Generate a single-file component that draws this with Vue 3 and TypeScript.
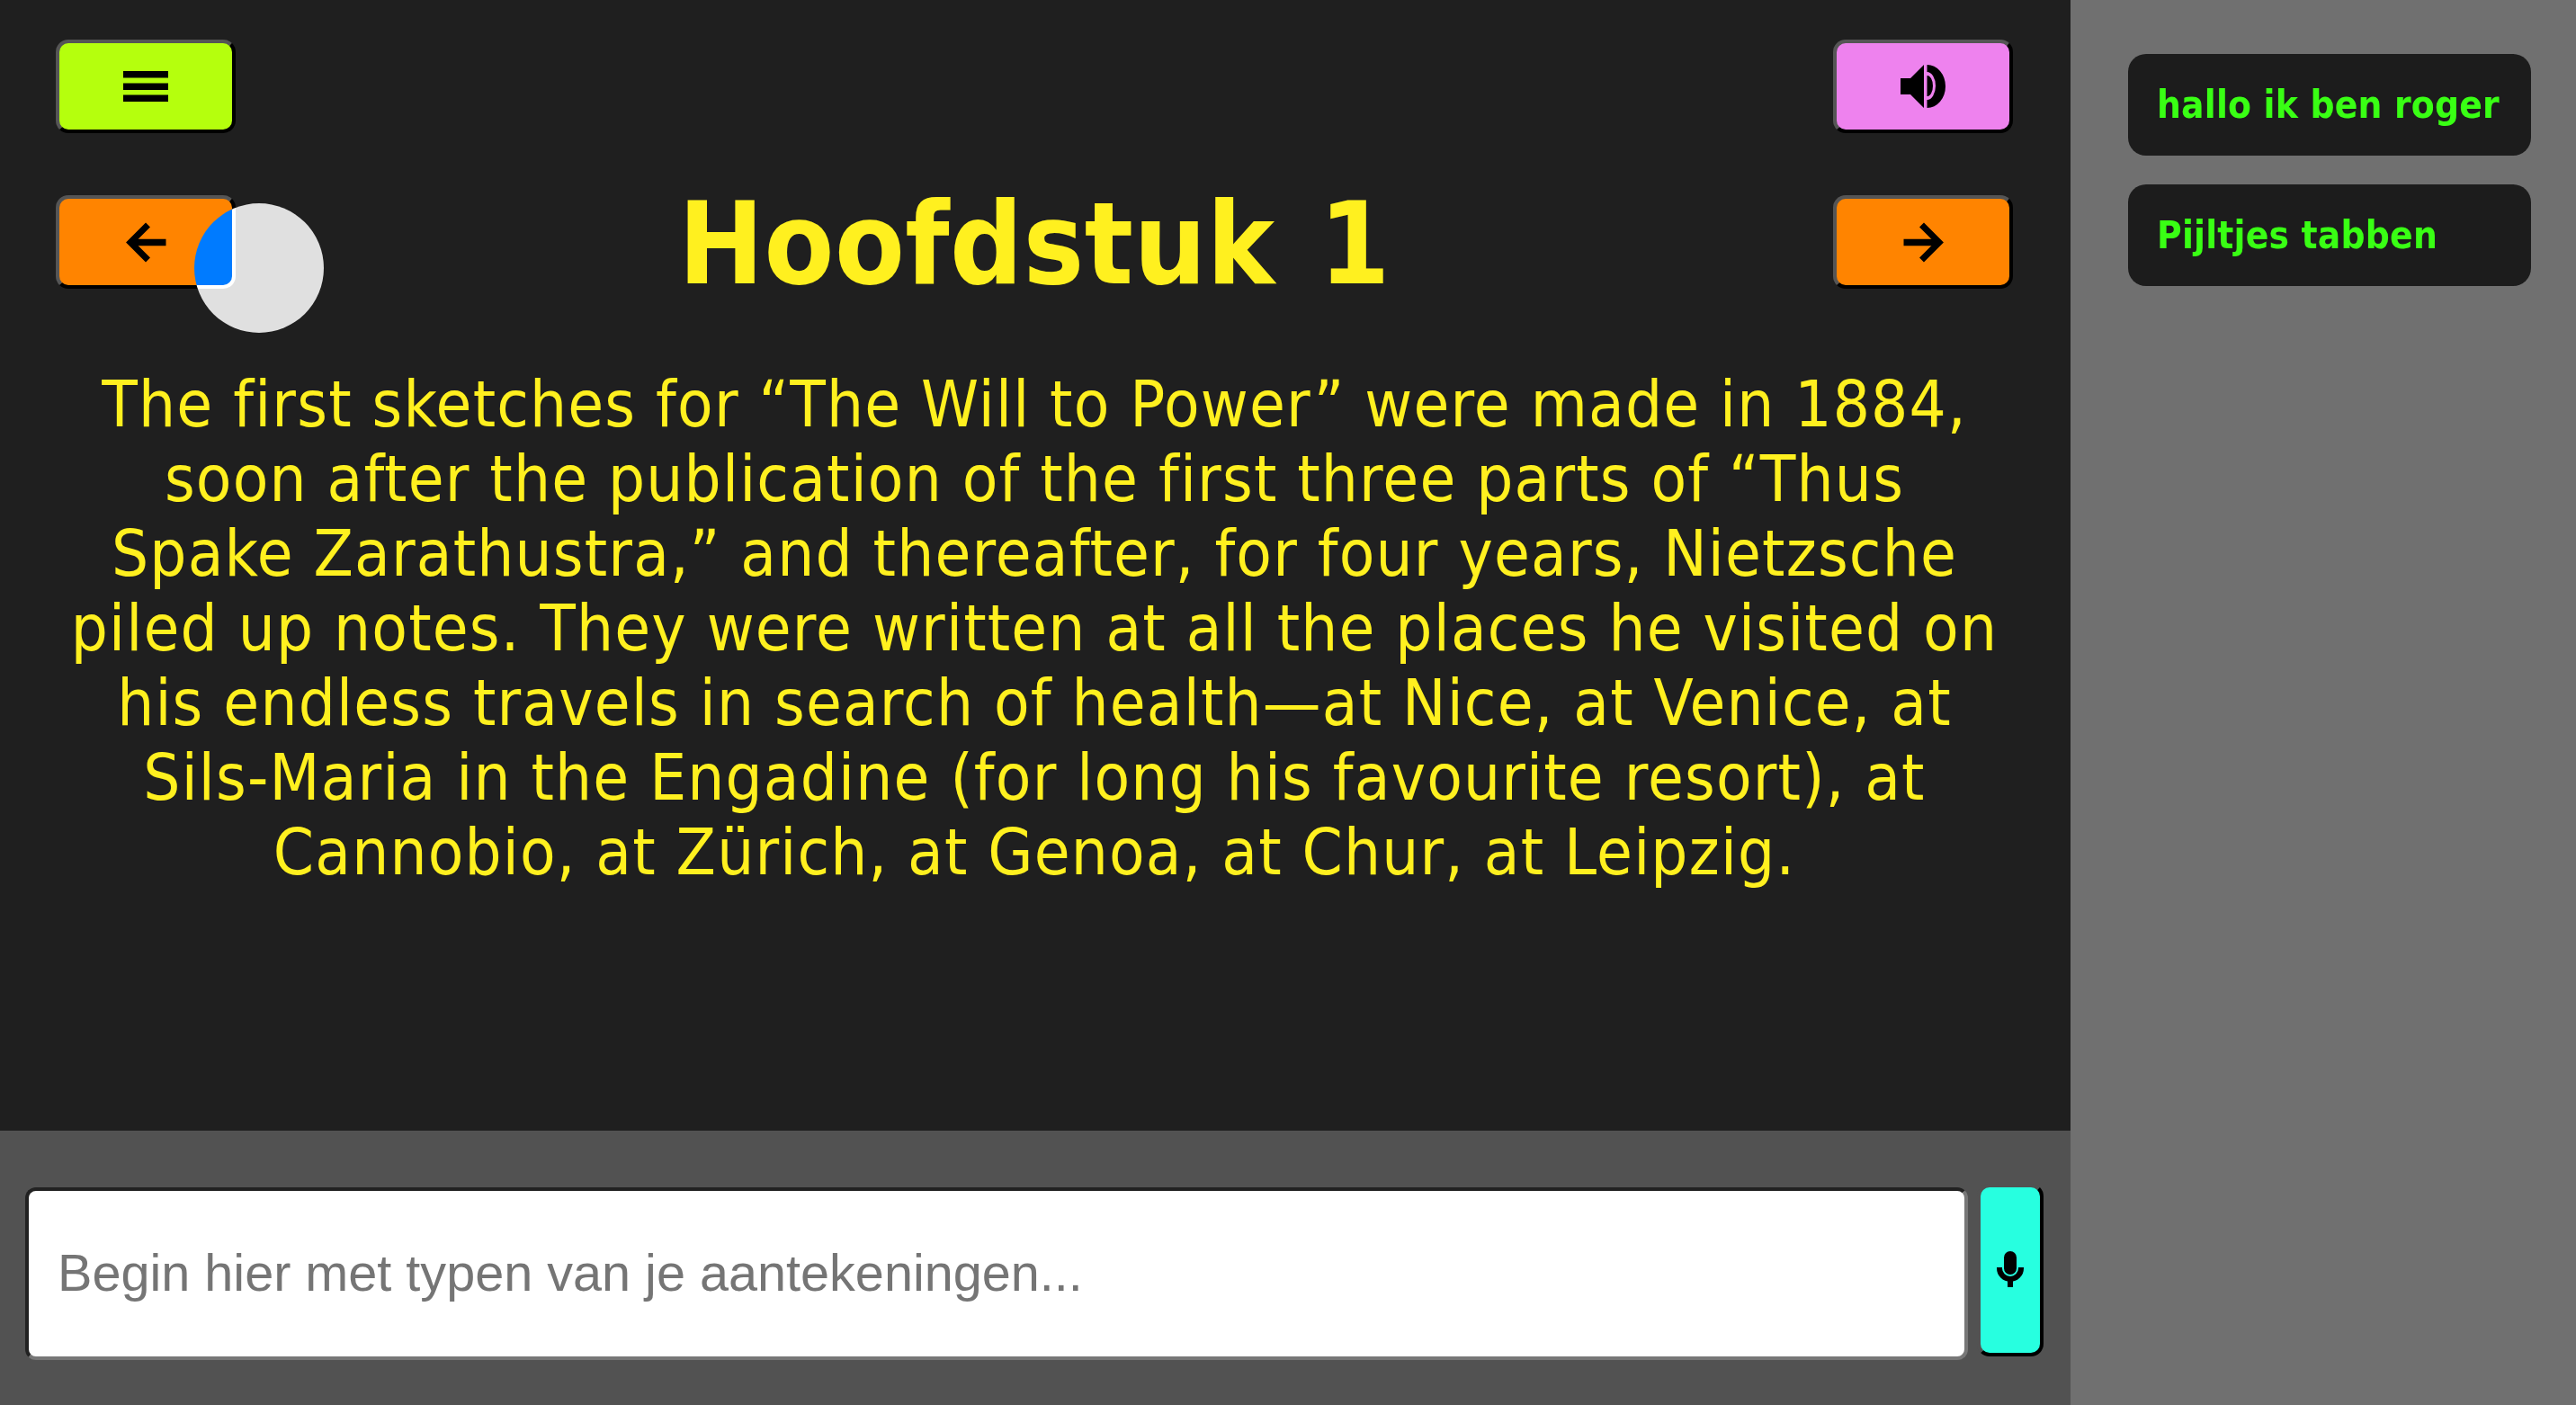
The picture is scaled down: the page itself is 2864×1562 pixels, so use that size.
<script setup lang="ts">
const lines: string[] = [
  'The first sketches for “The Will to Power” were made in 1884,',
  'soon after the publication of the first three parts of “Thus',
  'Spake Zarathustra,” and thereafter, for four years, Nietzsche',
  'piled up notes. They were written at all the places he visited on',
  'his endless travels in search of health—at Nice, at Venice, at',
  'Sils-Maria in the Engadine (for long his favourite resort), at',
  'Cannobio, at Zürich, at Genoa, at Chur, at Leipzig.',
]
const tabs: string[] = ['hallo ik ben roger', 'Pijltjes tabben']
</script>

<template>
  <div class="page">
    <main class="main">
      <section class="reader">
        <div class="row top-row">
          <button class="btn lime" aria-label="Menu">
            <svg width="50" height="34" viewBox="0 0 50 34"><rect width="50" height="7.5" /><rect y="13.5" width="50" height="7.5" /><rect y="26.5" width="50" height="7.5" /></svg>
          </button>
          <button class="btn violet" aria-label="Geluid">
            <svg width="50" height="48" viewBox="0 0 50 48">
              <path d="M0 15H11L26 0V48L11 33H0Z" />
              <path fill-rule="evenodd" d="M29.5 0A20.5 24 0 0 1 29.5 48ZM29.5 8V39A9.5 15.5 0 0 0 29.5 8ZM29.5 12A6.5 11.5 0 0 1 29.5 35Z" />
            </svg>
          </button>
        </div>
        <div class="row title-row">
          <button class="btn orange" aria-label="Vorige">
            <svg width="45" height="45" viewBox="0 0 45 45" fill="none" stroke="#000" stroke-width="7"><path d="M24.5 3L5 22.5L24.5 42" /><path d="M6 22.5H44.5" stroke-width="7.5" /></svg>
          </button>
          <h1 class="title">Hoofdstuk 1</h1>
          <button class="btn orange" aria-label="Volgende">
            <svg width="45" height="45" viewBox="0 0 45 45" fill="none" stroke="#000" stroke-width="7"><path d="M20.5 3L40 22.5L20.5 42" /><path d="M39 22.5H0.5" stroke-width="7.5" /></svg>
          </button>
        </div>
        <p class="text">
          <span v-for="line in lines" :key="line" class="line">{{ line }}</span>
        </p>
      </section>
      <footer class="notes">
        <input class="note-input" type="text" placeholder="Begin hier met typen van je aantekeningen..." />
        <button class="btn mic" aria-label="Microfoon">
          <svg class="mic-icon" width="30" height="40" viewBox="0 0 30 40">
            <rect x="8" width="14" height="26" rx="7" />
            <path d="M3 18V19A12 12 0 0 0 27 19V18" fill="none" stroke="#000" stroke-width="6" />
            <rect x="12" y="32" width="6" height="8" />
          </svg>
        </button>
      </footer>
    </main>
    <aside class="side">
      <div v-for="tab in tabs" :key="tab" class="tab">{{ tab }}</div>
    </aside>
    <div class="cursor"></div>
  </div>
</template>

<style>
html, body { margin: 0; padding: 0; background: #707070; }
</style>

<style scoped>
.page {
  position: relative;
  display: flex;
  width: 2864px;
  height: 1562px;
  overflow: hidden;
  background: #707070;
  font-family: "DejaVu Sans", sans-serif;
  font-stretch: condensed;
}
.main {
  display: flex;
  flex-direction: column;
  flex: 0 0 2302px;
  height: 1562px;
}
.reader {
  flex: 0 0 1257px;
  box-sizing: border-box;
  padding: 44px 64px 0 62px;
  background: #1f1f1f;
  color: #fff01f;
}
.row {
  display: flex;
  justify-content: space-between;
  align-items: center;
}
.title-row {
  margin-top: 69px;
}
.btn {
  box-sizing: border-box;
  display: flex;
  align-items: center;
  justify-content: center;
  flex: 0 0 200px;
  width: 200px;
  height: 104px;
  padding: 0;
  border: 4px solid;
  border-color: #555 #000 #000 #555;
  border-radius: 14px;
}
.lime { background: #b5ff0d; }
.violet { background: #ee82ee; }
.orange { background: #ff8400; }
.title {
  flex: 1;
  margin: 0 0 -3px;
  padding-top: 3px;
  font-size: 126px;
  line-height: 104px;
  font-weight: 700;
  letter-spacing: 0.5px;
  word-spacing: 9px;
  text-align: center;
  white-space: nowrap;
}
.text {
  margin: 87px 0 0;
  font-size: 72px;
  line-height: 83px;
  letter-spacing: 1.2px;
  text-align: center;
  white-space: nowrap;
}
.line {
  display: block;
}
.notes {
  flex: 1;
  display: flex;
  align-items: flex-start;
  gap: 10px;
  box-sizing: border-box;
  padding: 59px 30px 0 28px;
  background: #525252;
}
.note-input {
  box-sizing: border-box;
  width: 2160px;
  height: 192px;
  margin-top: 4px;
  padding: 0 32px 2px;
  border: 4px solid;
  border-color: #222 #777 #777 #222;
  border-radius: 12px;
  background: #fff;
  font-family: "Liberation Sans", Arial, sans-serif;
  font-stretch: normal;
  font-size: 57.6px;
  outline: none;
}
.note-input::placeholder {
  color: #757575;
  opacity: 1;
}
.mic {
  flex: 0 0 74px;
  width: 74px;
  height: 192px;
  border-color: #525252 #000 #000 #525252;
  background: #27ffe0;
}
.mic-icon {
  margin-bottom: 2px;
}
.side {
  flex: 1;
  min-width: 0;
  display: flex;
  flex-direction: column;
  gap: 32px;
  box-sizing: border-box;
  padding: 60px 50px 0 64px;
}
.tab {
  box-sizing: border-box;
  display: flex;
  align-items: center;
  height: 113px;
  padding: 0 32px;
  border-radius: 20px;
  background: #1c1c1c;
  color: #39ff14;
  font-size: 42px;
  letter-spacing: 0.2px;
  font-weight: 700;
  white-space: nowrap;
}
.cursor {
  position: absolute;
  left: 216px;
  top: 226px;
  width: 144px;
  height: 144px;
  border-radius: 50%;
  background: #fff;
  mix-blend-mode: difference;
}
</style>
